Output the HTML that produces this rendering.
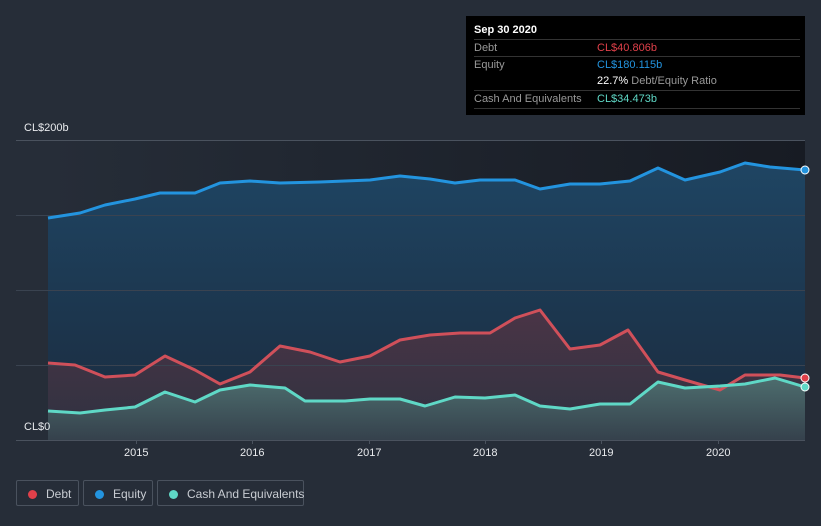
<!DOCTYPE html>
<html><head><style>
body{margin:0;width:821px;height:526px;background:#262d38;font-family:"Liberation Sans",sans-serif;overflow:hidden;position:relative}
.tip{position:absolute;left:466px;top:16px;width:339px;height:99px;background:#000;color:#fff;font-size:11px}
.tip .h{position:absolute;left:8px;top:8px;font-weight:bold}
.row{position:absolute;left:8px;width:326px;border-top:1px solid #333;height:17px;line-height:16px;color:#999}
.row span{position:absolute;left:123px}
.leg{position:absolute;top:480px;height:26px;border:1px solid #4a525e;border-radius:2px;color:#c8ccd2;font-size:12px;line-height:26px;box-sizing:border-box;white-space:nowrap}
.leg i{display:inline-block;width:9px;height:9px;border-radius:50%;margin:0 9px 0 11px;vertical-align:-1px}
.ax{position:absolute;color:#e8eaed;font-size:11px}
</style></head><body>
<svg width="821" height="526" style="position:absolute;left:0;top:0">
<defs>
<linearGradient id="bg" x1="0" x2="1"><stop offset="0" stop-color="#262d38"/><stop offset="1" stop-color="#171b23"/></linearGradient>
<linearGradient id="eq" x1="0" y1="0" x2="0" y2="1"><stop offset="0" stop-color="#1f4563"/><stop offset="1" stop-color="#1a2a3d"/></linearGradient>
<linearGradient id="db" x1="0" y1="0" x2="0" y2="1"><stop offset="0" stop-color="#4a3446"/><stop offset="1" stop-color="#2e3240"/></linearGradient>
<linearGradient id="cs" x1="0" y1="0" x2="0" y2="1"><stop offset="0" stop-color="#4d6d6e"/><stop offset="1" stop-color="#35414c"/></linearGradient>
</defs>
<rect x="48" y="140" width="757" height="300" fill="url(#bg)"/>
<path d="M48,218 L80,213 105,205 135,199 160,193 195,193 220,183 250,181 280,183 320,182 370,180 400,176 430,179 455,183 480,180 515,180 540,189 570,184 600,184 630,181 658,168 685,180 720,172 745,163 770,167 805,170 L805,440 48,440Z" fill="url(#eq)"/>
<path d="M48,363 L75,365 105,377 135,375 165,356 195,370 220,384 250,372 280,346 310,352 340,362 370,356 400,340 430,335 460,333 490,333 515,318 540,310 570,349 600,345 628,330 658,372 685,380 720,390 745,375 780,375 805,378 L805,440 48,440Z" fill="url(#db)"/>
<path d="M48,411 L80,413 105,410 135,407 165,392 195,402 220,390 250,385 285,388 305,401 345,401 370,399 400,399 425,406 455,397 485,398 515,395 540,406 570,409 600,404 630,404 658,382 685,388 720,386 745,384 775,378 805,387 L805,440 48,440Z" fill="url(#cs)"/>
<g stroke="#3a4350" stroke-width="1"><line x1="16" x2="805" y1="140.5" y2="140.5" stroke="#4a525e"/><line x1="16" x2="805" y1="215.5" y2="215.5"/><line x1="16" x2="805" y1="290.5" y2="290.5"/><line x1="16" x2="805" y1="365.5" y2="365.5"/><line x1="16" x2="805" y1="440.5" y2="440.5" stroke="#4a525e"/></g>
<g fill="none" stroke-width="3" stroke-linejoin="round">
<polyline stroke="#2394df" points="48,218 80,213 105,205 135,199 160,193 195,193 220,183 250,181 280,183 320,182 370,180 400,176 430,179 455,183 480,180 515,180 540,189 570,184 600,184 630,181 658,168 685,180 720,172 745,163 770,167 805,170"/>
<polyline stroke="#d0505a" points="48,363 75,365 105,377 135,375 165,356 195,370 220,384 250,372 280,346 310,352 340,362 370,356 400,340 430,335 460,333 490,333 515,318 540,310 570,349 600,345 628,330 658,372 685,380 720,390 745,375 780,375 805,378"/>
<polyline stroke="#5fd8c6" points="48,411 80,413 105,410 135,407 165,392 195,402 220,390 250,385 285,388 305,401 345,401 370,399 400,399 425,406 455,397 485,398 515,395 540,406 570,409 600,404 630,404 658,382 685,388 720,386 745,384 775,378 805,387"/>
</g>
<circle cx="805" cy="170" r="4" fill="#2394df" stroke="#fff"/>
<circle cx="805" cy="378" r="4" fill="#e0404a" stroke="#fff"/>
<circle cx="805" cy="387" r="4" fill="#5fd8c6" stroke="#fff"/>
<g stroke="#4a525e"><line x1="136.5" x2="136.5" y1="440" y2="444"/><line x1="252.5" x2="252.5" y1="440" y2="444"/><line x1="369.5" x2="369.5" y1="440" y2="444"/><line x1="485.5" x2="485.5" y1="440" y2="444"/><line x1="601.5" x2="601.5" y1="440" y2="444"/><line x1="718.5" x2="718.5" y1="440" y2="444"/></g>
</svg>
<div class="ax" style="left:24px;top:122px">CL$200b</div>
<div class="ax" style="left:24px;top:421px">CL$0</div>
<div class="ax" style="left:124px;top:447px">2015</div>
<div class="ax" style="left:240px;top:447px">2016</div>
<div class="ax" style="left:357px;top:447px">2017</div>
<div class="ax" style="left:473px;top:447px">2018</div>
<div class="ax" style="left:589px;top:447px">2019</div>
<div class="ax" style="left:706px;top:447px">2020</div>
<div class="tip">
<div class="h">Sep 30 2020</div>
<div class="row" style="top:23px">Debt<span style="color:#e0404a">CL$40.806b</span></div>
<div class="row" style="top:40px">Equity<span style="color:#2394df">CL$180.115b</span></div>
<div class="row" style="top:57px;border-top:none"><span style="color:#999"><b style="color:#fff;font-weight:normal">22.7%</b> Debt/Equity Ratio</span></div>
<div class="row" style="top:74px;border-bottom:1px solid #333">Cash And Equivalents<span style="color:#5fd8c6">CL$34.473b</span></div>
</div>
<div class="leg" style="left:16px;width:63px"><i style="background:#e0404a"></i>Debt</div>
<div class="leg" style="left:83px;width:70px"><i style="background:#2394df"></i>Equity</div>
<div class="leg" style="left:157px;width:147px"><i style="background:#5fd8c6"></i>Cash And Equivalents</div>
</body></html>
